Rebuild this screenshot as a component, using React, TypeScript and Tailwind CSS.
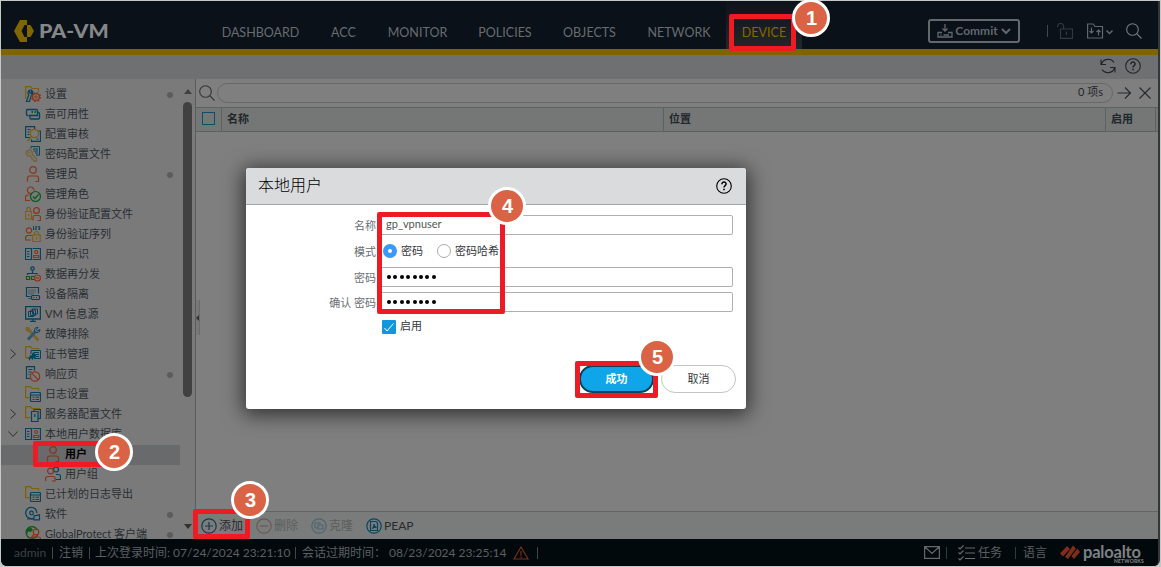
import React from 'react';
import clsx from 'clsx';

const BLUE = '#06415e';
const ORANGE = '#8a3418';
const YELLOW = '#7d6008';
const GREEN = '#0b5a1c';

const TABS = [
  { label: 'DASHBOARD', width: 'w-[109px]' },
  { label: 'ACC', width: 'w-[57px]' },
  { label: 'MONITOR', width: 'w-[91px]' },
  { label: 'POLICIES', width: 'w-[84px]' },
  { label: 'OBJECTS', width: 'w-[85px]' },
  { label: 'NETWORK', width: 'w-[94px]' },
  { label: 'DEVICE', width: 'w-[76px]', active: true },
];

type Item = {
  label: string;
  icon: string;
  dot?: boolean;
  arrow?: 'right' | 'down';
  child?: boolean;
  selected?: boolean;
};

const ITEMS: Item[] = [
  { label: '设置', icon: 'setup', dot: true },
  { label: '高可用性', icon: 'ha' },
  { label: '配置审核', icon: 'audit' },
  { label: '密码配置文件', icon: 'key' },
  { label: '管理员', icon: 'user', dot: true },
  { label: '管理角色', icon: 'role' },
  { label: '身份验证配置文件', icon: 'authProfile' },
  { label: '身份验证序列', icon: 'authSequence' },
  { label: '用户标识', icon: 'userId' },
  { label: '数据再分发', icon: 'redistribute' },
  { label: '设备隔离', icon: 'quarantine' },
  { label: 'VM 信息源', icon: 'vm' },
  { label: '故障排除', icon: 'tools' },
  { label: '证书管理', icon: 'cert', arrow: 'right' },
  { label: '响应页', icon: 'response', dot: true },
  { label: '日志设置', icon: 'log' },
  { label: '服务器配置文件', icon: 'server', arrow: 'right' },
  { label: '本地用户数据库', icon: 'userId', arrow: 'down' },
  { label: '用户', icon: 'user', child: true, selected: true },
  { label: '用户组', icon: 'group', child: true },
  { label: '已计划的日志导出', icon: 'log' },
  { label: '软件', icon: 'software', dot: true },
  { label: 'GlobalProtect 客户端', icon: 'globe', dot: true },
];

const FOLDER = <path d="M13.500 4.500v-2H7L5.500.6H.6v11H4.500" stroke={YELLOW} strokeWidth="1.200" />;

const ICONS: Record<string, React.ReactNode> = {
  setup: (
    <>
      <path d="M.7 6V.6h5L7.200 2.500h6.300v3M.7 6v7" stroke={YELLOW} strokeWidth="1.200" />
      <path d="M1.500 15.500L3.800 8.800C2.300 7 3 4.800 4.700 4v3l1.800.5V4.300c1.900 1.200 1.800 4-.2 5L4.500 15.500z" stroke={BLUE} strokeWidth="1.200" />
      <circle cx="11" cy="11" r="3.400" stroke={ORANGE} strokeWidth="1.400" />
      <circle cx="11" cy="11" r="4.500" stroke={ORANGE} strokeWidth="1.200" strokeDasharray="1.700 1.830" />
      <circle cx="11" cy="11" r="1.200" stroke={ORANGE} />
    </>
  ),
  ha: (
    <>
      <path d="M3.500 9.500h-1a1 1 0 0 1-1-1v-4a1 1 0 0 1 1-1h9a1 1 0 0 1 1 1v5H4" stroke={BLUE} strokeWidth="1.300" />
      <path d="M12.500 6.500h1a1 1 0 0 1 1 1v4.500a1 1 0 0 1-1 1H6a1 1 0 0 1-1-1V9.500" stroke={BLUE} strokeWidth="1.300" />
      <path d="M6.500 6h1.500M9.500 6H11" stroke={GREEN} strokeWidth="1.800" />
    </>
  ),
  audit: (
    <>
      <path d="M5 11.500H.6V.6h9v2.500M2.500 3.500h3M2.500 6H4.500M2.500 8.500h2" stroke={BLUE} strokeWidth="1.200" />
      <path d="M13.500 5h2v10.400H6.500V13.500M11.500 13h2" stroke={BLUE} strokeWidth="1.200" />
      <circle cx="9.500" cy="7.500" r="4.200" stroke={YELLOW} strokeWidth="1.200" />
      <path d="M6.500 10.500L2.500 15" stroke={YELLOW} strokeWidth="1.500" />
    </>
  ),
  key: (
    <>
      <path d="M6 2.500V.6h8.500v8.500H11M8 3h5M8.500 5h4.500M10 7h3" stroke={BLUE} />
      <path d="M1 6.500C1.500 4 4.500 3 6.500 5l1 1.500-.5 1.500 4.500 5v2H9l-1-1.500-1-.5V12L5 9.500 3 10C1.500 9.500 1 8 1 6.500z" stroke="#75643a" strokeWidth="1.400" />
      <circle cx="3.800" cy="6.700" r="1" stroke="#75643a" />
    </>
  ),
  user: (
    <>
      <circle cx="8" cy="4" r="3.300" stroke={ORANGE} strokeWidth="1.200" />
      <path d="M2.500 15.500v-3.500a2 2 0 0 1 2-2h7a2 2 0 0 1 2 2v3.500h-3" stroke={ORANGE} strokeWidth="1.200" />
    </>
  ),
  role: (
    <>
      <path d="M6.500 7.500A3.300 3.300 0 1 1 9 4.500M5 14.500H.5V11a2 2 0 0 1 2-2h2" stroke={ORANGE} strokeWidth="1.200" />
      <circle cx="10.500" cy="10.500" r="5" stroke={GREEN} strokeWidth="1.200" />
      <path d="M8 10.500l2 2 3.500-4" stroke={GREEN} strokeWidth="1.200" />
    </>
  ),
  authProfile: (
    <>
      <path d="M.5 5.500h6v7.500h-6zM2 5V3a1.700 1.700 0 0 1 3.400 0v2M3.600 8v2.500" stroke={YELLOW} strokeWidth="1.200" />
      <circle cx="11.500" cy="4.500" r="2.900" stroke={ORANGE} strokeWidth="1.200" />
      <path d="M8 14.500v-3c0-1 .5-2 1.500-2h4c1 0 2 1 2 2v3h-3" stroke={ORANGE} strokeWidth="1.200" />
    </>
  ),
  authSequence: (
    <>
      <circle cx="4" cy="4.500" r="2.700" stroke={ORANGE} strokeWidth="1.200" />
      <path d="M6 14H.6v-2.500a2 2 0 0 1 2-2H7" stroke={ORANGE} strokeWidth="1.200" />
      <path d="M7.700 9h7.500v6.500H7.700zM9.500 9V7.500a2 2 0 0 1 4 0V9M11.500 11v2.500" stroke={YELLOW} strokeWidth="1.200" />
      <path d="M8.500 0v4M10.200.5h1.500v1.500h-1.500v1.500h1.500M13.200.5h1.500v3h-1.500M13.200 2h1.500" stroke={BLUE} strokeWidth=".9" />
    </>
  ),
  userId: (
    <>
      <path d="M7.500 13.500h-7v-11h7M8 2.500h7.500v11H8M6.500 2.500v11" stroke={BLUE} strokeWidth="1.200" />
      <path d="M2 5.500h3M2 8h3M2 10.500h3" stroke={BLUE} strokeDasharray="2 .6" />
      <circle cx="11.200" cy="6" r="1.500" stroke={ORANGE} strokeWidth="1.200" />
      <path d="M8.700 11.500V9.500h5v2z" stroke={ORANGE} strokeWidth="1.200" />
    </>
  ),
  redistribute: (
    <>
      <circle cx="7.500" cy="2.500" r="1.700" stroke={BLUE} strokeWidth="1.200" />
      <path d="M7.500 4.500v3M2.500 9V7.500h10" stroke={BLUE} strokeWidth="1.200" />
      <path d="M1.500 10.500h3v3h-3zM6.500 10.500h3v3h-3z" stroke={GREEN} strokeWidth="1.200" />
      <circle cx="12.500" cy="12" r="3" stroke={ORANGE} strokeWidth="1.200" fill="#7b7b7b" />
      <path d="M11 12h3" stroke={ORANGE} strokeWidth="1.200" />
    </>
  ),
  quarantine: (
    <>
      <path d="M5.500 10.500h-4v-9h12v6M3.500 12.500h2" stroke={BLUE} strokeWidth="1.200" />
      <path d="M3.500 4h8M3.500 6h8M3.500 8h6" stroke={BLUE} strokeDasharray="1 1" />
      <rect x="6.500" y="9.500" width="8" height="4" rx="1" stroke={BLUE} strokeWidth="1.200" />
      <path d="M8.500 11.500h1M11 11.500h1" stroke={BLUE} />
    </>
  ),
  vm: (
    <>
      <path d="M.6.700h14.800v12.300H.6zM8 13v2.500M5 15.500h6" stroke={BLUE} strokeWidth="1.300" />
      <path d="M3.500 5.500h5v5h-5zM7.500 3h5v5h-5zM5.500 4h5v5.500h-5z" stroke={BLUE} />
    </>
  ),
  tools: (
    <>
      <path d="M4 4l9.500 10.500" stroke="#7a642c" strokeWidth="3" />
      <path d="M1 1.500h3l1.500 3L4 6 1 4z" stroke="#7a642c" fill="#7a642c" />
      <path d="M3 13.500l7.500-8" stroke="#31566b" strokeWidth="3" />
      <path d="M13 1.500C10.500 1 9 3 9.500 5L11 6.500c2 .5 4-.5 4-3L12.500 5 11.300 3.500z" stroke={BLUE} />
    </>
  ),
  cert: (
    <>
      {FOLDER}
      <path d="M6 8V4.500h9.500v8H9M9 6.500h5M10 8.500h4M11 10.500h3" stroke={BLUE} />
      <path d="M8 6l3 3-.5 3L9 13v-2l-1.500 3L6 12l-2 3v-2.500H2L5 11 4 9.500h2.500z" fill={BLUE} />
    </>
  ),
  response: (
    <>
      <path d="M5 12.500H1.500V.6h8v4M3.500 3.500h4M3.500 6h3M3.500 8.500h1" stroke={BLUE} strokeWidth="1.200" />
      <circle cx="10" cy="10.500" r="4.700" stroke={ORANGE} strokeWidth="1.200" />
      <path d="M6.700 7.200l6.600 6.600" stroke={ORANGE} strokeWidth="1.200" />
    </>
  ),
  log: (
    <>
      {FOLDER}
      <rect x="5.500" y="6.500" width="10" height="9" rx="1" stroke={BLUE} strokeWidth="1.200" />
      <path d="M5.500 9h10M7.500 11.200h2M10.500 11.200h3.500M7.500 13.500h2M10.500 13.500h3.500" stroke={BLUE} />
    </>
  ),
  server: (
    <>
      <path d="M14.500 3V2.500H7L5.500.6H.6v11H5" stroke={YELLOW} strokeWidth="1.200" />
      <path d="M6.500 5.500H13v10H6.500zM9 5.500V3.500h6.400v9h-2M9.800 8v3" stroke={BLUE} strokeWidth="1.200" />
    </>
  ),
  group: (
    <>
      <circle cx="11" cy="3.500" r="2.500" stroke={BLUE} strokeWidth="1.200" />
      <path d="M11 8.500h2.500a2 2 0 0 1 2 2v3H11" stroke={BLUE} strokeWidth="1.200" />
      <circle cx="5.500" cy="5" r="2.900" stroke={ORANGE} strokeWidth="1.200" />
      <path d="M.6 15v-2.500a2 2 0 0 1 2-2h5.500a2 2 0 0 1 2 2V15H7" stroke={ORANGE} strokeWidth="1.200" />
    </>
  ),
  software: (
    <>
      <path d="M11.900 7A5.600 5.600 0 1 0 8 12.300" stroke={BLUE} strokeWidth="1.300" />
      <circle cx="6.500" cy="7" r="1.800" stroke={BLUE} strokeWidth="1.200" />
      <path d="M2 13h6.500M9 9.800l5.500-1v5H9z" stroke={BLUE} strokeWidth="1.200" />
    </>
  ),
  globe: (
    <>
      <circle cx="7" cy="6.500" r="5.900" stroke={GREEN} strokeWidth="1.300" />
      <path d="M2 3l4-1.500L8 4 5.500 6 3 5.500 2 9z" fill={GREEN} />
      <circle cx="11" cy="6" r="2.800" stroke={ORANGE} strokeWidth="1.200" fill="#7b7b7b" />
      <path d="M9 8.500l-3.500 4M6.500 15.500V13a2 2 0 0 1 2-2h5a2 2 0 0 1 2 2v2.500" stroke={ORANGE} strokeWidth="1.200" />
    </>
  ),
};

function Badge({ n, className }: { n: number; className: string }) {
  return (
    <div
      className={clsx(
        'absolute z-30 flex size-[38px] items-center justify-center rounded-full border-3 border-white bg-[#d96344] pb-px pl-px text-[20px] font-bold text-white font-["Liberation_Sans",sans-serif]',
        className,
      )}
    >
      {n}
    </div>
  );
}

function Marker({ className }: { className: string }) {
  return <div className={clsx('absolute z-20 rounded-[2px] border-[5px] border-[#ed1c24]', className)} />;
}

function Help({ className }: { className?: string }) {
  return (
    <svg viewBox="0 0 16 16" fill="none" stroke="currentColor" className={className}>
      <circle cx="8" cy="8" r="7.300" strokeWidth="1.100" />
      <path d="M5.900 6.200c0-3 4.300-2.700 4.200-.2 0 1.600-2.100 1.500-2.100 3.400" strokeWidth="1.500" />
      <path d="M8 10.700v1.500" strokeWidth="1.600" />
    </svg>
  );
}

function SearchGlyph({ className }: { className?: string }) {
  return (
    <svg viewBox="0 0 16 16" fill="none" stroke="currentColor" strokeWidth="1.100" className={className}>
      <circle cx="6.500" cy="6.500" r="5.800" />
      <path d="M10.700 10.700l4.800 4.800" />
    </svg>
  );
}

function Header() {
  return (
    <header className="flex h-[54px] shrink-0 border-b-6 border-[#7f6400] bg-[#0b1118]">
      <div className="flex w-[205px] shrink-0 items-center pt-3 pl-[13px]">
        <svg viewBox="0 0 20 22" className="h-[22px] w-5" fill="#806600">
          <path d="M6 0h7v5h-2.500L7.500 11l3 6H13v5H6L0 11z" />
          <path d="M13 5h3.500L20 11l-3.500 6H13z" />
        </svg>
        <span className="ml-[5px] origin-left scale-x-[1.12] text-[19px] leading-5 font-black text-[#858789]">PA-VM</span>
      </div>
      <nav className="flex">
        {TABS.map((tab) => (
          <div
            key={tab.label}
            className={clsx(
              'flex items-center justify-center pt-[17px] text-[12.500px] whitespace-nowrap',
              tab.width,
              tab.active ? 'bg-linear-to-b from-[#0d1319] to-[#23272c] text-[#856900]' : 'text-[#676c71]',
            )}
          >
            {tab.label}
          </div>
        ))}
      </nav>
      <div className="ml-auto flex items-center pt-3 pr-4 text-[#62676b]">
        <div className="flex h-6 w-[92px] items-center justify-center rounded-[3px] border-2 border-[#65696c] text-[12px] font-bold">
          <svg viewBox="0 0 16 16" className="mr-0.5 size-4" fill="none" stroke="currentColor" strokeWidth="1.300">
            <path d="M8 1v7M5.500 5.500L8 8l2.500-2.500M5 9.500H1v4.500h14V9.500h-4M3.500 12h1M6.500 12H12" />
          </svg>
          Commit
          <svg viewBox="0 0 10 8" className="ml-[3px] h-2 w-2.5" fill="none" stroke="currentColor" strokeWidth="2">
            <path d="M1 2l4 4 4-4" />
          </svg>
        </div>
        <div className="ml-[27px] h-3 w-px bg-[#42474b]" />
        <svg viewBox="0 0 16 16" className="ml-[9px] size-4 text-[#34393e]" fill="none" stroke="currentColor" strokeWidth="1.200">
          <path d="M.6 4V3.500a3 3 0 0 1 6 0V6M3.500 6h12v9.400h-12zM9.500 8.500v3.500" />
        </svg>
        <svg viewBox="0 0 26 16" className="ml-[14px] h-4 w-[26px]" fill="none" stroke="currentColor" strokeWidth="1.200">
          <path d="M.6 1h5.500L8 3.500h7.500V15H.6zM4.500 4.500V10M2.500 8l2 2 2-2M11.500 12.500V7M9.500 9l2-2 2 2" />
          <path d="M19.500 7.500l3 3 3-3" strokeWidth="1.500" />
        </svg>
        <SearchGlyph className="ml-[13px] size-4 text-[#777b7e]" />
      </div>
    </header>
  );
}

function Sidebar() {
  return (
    <aside className="flex w-[195px] shrink-0 border-r border-[#5c5c5c] bg-[#7a7a7a]">
      <div className="w-[179px] overflow-hidden pt-[6px]">
        {ITEMS.map((item) => (
          <div
            key={item.label}
            className={clsx(
              'relative flex h-5 items-center pb-0.5 pl-6 whitespace-nowrap',
              item.child && 'pl-11',
              item.selected && 'bg-[#696a6b]',
            )}
          >
            {item.arrow && (
              <svg
                viewBox="0 0 10 10"
                className={clsx('absolute left-[7px] size-2.5', item.arrow === 'down' && 'rotate-90')}
                fill="none"
                stroke="#303030"
              >
                <path d="M2.500.5L7.500 5l-5 4.500" />
              </svg>
            )}
            <svg viewBox="0 0 16 16" className="size-4 shrink-0" fill="none">
              {ICONS[item.icon]}
            </svg>
            <span
              className={clsx(
                'ml-1 text-[11px] leading-4',
                item.selected ? 'font-bold text-black' : 'text-[#292e33]',
              )}
            >
              {item.label}
            </span>
            {item.dot && <span className="absolute top-[7px] right-[7px] size-1.5 rounded-full bg-[#5c5c5c]" />}
          </div>
        ))}
      </div>
      <div className="flex flex-1 flex-col items-center pt-[10px] pb-[10px]">
        <div className="border-x-[4.500px] border-b-5 border-x-transparent border-b-[#404040]" />
        <div className="mt-2 h-[295px] w-[9px] rounded-full bg-[#414141]" />
        <div className="mt-auto border-x-[4.500px] border-t-5 border-x-transparent border-t-[#303030]" />
      </div>
    </aside>
  );
}

function Action({ label, off, color, children }: { label: string; off?: boolean; color: string; children: React.ReactNode }) {
  return (
    <div className={clsx('flex items-center gap-0.5 text-[12px]', off ? 'text-[#5c5e5e]' : 'text-[#272b2e]')}>
      <svg viewBox="0 0 16 16" className="size-4" fill="none" stroke={color} strokeWidth="1.200">
        <circle cx="8" cy="8" r="7.200" />
        {children}
      </svg>
      {label}
    </div>
  );
}

function Content() {
  return (
    <main className="relative flex flex-1 flex-col bg-[#7f7f7f] text-[#22262a]">
      <div className="flex h-7 shrink-0 items-center pb-px pl-[3px]">
        <SearchGlyph className="size-4 text-[#30353a]" />
        <div className="ml-0.5 flex h-5 w-[896px] items-center justify-end rounded-full border border-[#686868] pr-[9px] text-[11px]">
          0 项s
        </div>
        <svg viewBox="0 0 36 14" className="ml-1 h-3.5 w-9" fill="none" stroke="#25292c" strokeWidth="1.100">
          <path d="M.5 7h13M8 1.500L13.500 7 8 12.500M22.500 1.500l11 11M33.500 1.500l-11 11" />
        </svg>
      </div>
      <div className="flex h-[25px] shrink-0 border-y border-[#5c6161] bg-[#757777] text-[11px] leading-[21px] font-bold">
        <div className="flex w-[26px] items-center justify-center border-r border-[#5c6161] pb-0.5">
          <div className="size-[13px] border border-[#094f70]" />
        </div>
        <div className="w-[442px] border-r border-[#5c6161] pl-[5px]">名称</div>
        <div className="w-[442px] border-r border-[#5c6161] pl-[5px]">位置</div>
        <div className="w-[50px] border-r border-[#5c6161] pl-[5px]">启用</div>
      </div>
      <div className="flex-1" />
      {/* splitter handle */}
      <div className="absolute top-[221px] left-0 flex h-[35px] w-1 items-center border-r border-[#6a6a6a] bg-[#777]">
        <div className="border-y-3 border-r-3 border-y-transparent border-r-[#333]" />
      </div>
      <div className="flex h-7 shrink-0 items-center gap-[13px] border-t border-[#626666] bg-[#7a7c7b] pl-[5px]">
        <Action label="添加" color="#17384a"><path d="M8 4v8M4 8h8" /></Action>
        <Action label="删除" color="#6b5658" off><path d="M4 8h8" /></Action>
        <Action label="克隆" color="#4d6570" off><path d="M7 10H4V5h5v2M7 7h5v4H7z" /></Action>
        <Action label="PEAP" color="#0a4360"><path d="M4.500 3.500H10l1.500 1.500v7.500h-7zM6 10.500c2-1 2-3 2-4.500 0 2 1 3 2.500 3.500C9 9 7.500 9.500 6 10.500" /></Action>
      </div>
    </main>
  );
}

function Footer() {
  return (
    <footer className="flex h-[27px] shrink-0 items-center bg-[#02090d] pl-3 text-[12px] whitespace-nowrap text-[#5b5f61]">
      <span className="ml-px w-8 text-[#3c4245]">admin</span>
      <i className="ml-[6px] h-3 w-px bg-[#414649]" />
      <span className="ml-[6px] w-6">注销</span>
      <i className="ml-[6px] h-3 w-px bg-[#414649]" />
      <span className="ml-[5px] w-[195px]">上次登录时间: 07/24/2024 23:21:10</span>
      <i className="ml-[5px] h-3 w-px bg-[#414649]" />
      <span className="ml-[6px] w-[87px]">会话过期时间：</span>
      <span className="w-[117px]">08/23/2024 23:25:14</span>
      <svg viewBox="0 0 16 14" className="ml-[7px] h-3.5 w-4" fill="none" stroke="#762f19" strokeWidth="1.200">
        <path d="M8 1l7 12H1zM8 5v4.500M8 10.500V12" />
      </svg>
      <i className="ml-2 h-3 w-px bg-[#414649]" />
      <div className="ml-auto flex items-center pr-[11px]">
        <svg viewBox="0 0 16 13" className="h-[13px] w-4" fill="none" stroke="#62676d" strokeWidth="1.200">
          <path d="M.6.6h14.800v11.800H.6zM1 1l7 6.500L15 1" />
        </svg>
        <i className="ml-[6px] h-3 w-px bg-[#34393c]" />
        <svg viewBox="0 0 17 16" className="ml-[11px] h-4 w-[17px]" fill="none" stroke="#666b6f" strokeWidth="1.100">
          <path d="M7 3h10M7 8h10M7 13.500h10M.5 2.500L2 4l3.500-3.500M.5 7.500L2 9l3.500-3.500M.5 13.500L2 15l3.500-3.500" />
        </svg>
        <span className="ml-[3px]">任务</span>
        <i className="ml-[13px] h-3 w-px bg-[#34393c]" />
        <span className="ml-[7px]">语言</span>
        <svg viewBox="0 0 20 15" className="ml-[13px] h-[15px] w-5" fill="#7e2d18">
          <path d="M0 8.500L7 1l3 3-7 7.500zM5 12L13 .5l3 3L8 14zM11.500 11l6-7.500L20 7l-6 7z" />
        </svg>
        <div className="ml-[3px] flex w-16 flex-col pt-1 text-[#7e8182]">
          <span className="text-[16.500px] leading-[14px] font-bold tracking-[-0.2px]">paloalto</span>
          <span className="pr-[3px] text-right text-[5px] leading-[5px] font-black tracking-[0.2px]">NETWORKS</span>
        </div>
      </div>
    </footer>
  );
}

function Row({ label, className, children }: { label?: string; className: string; children: React.ReactNode }) {
  return (
    <div className={clsx('flex items-center', className)}>
      <label className="w-[131px] pt-0.5 pr-px text-right text-[#6b7075]">{label}</label>
      {children}
    </div>
  );
}

function LocalUserDialog() {
  return (
    <section className="absolute top-[168px] left-[246px] z-10 h-[241px] w-[500px] overflow-hidden rounded-[3px] bg-white text-[11px] text-[#33383d] shadow-[0_3px_20px_3px_rgba(0,0,0,0.6)]">
      <div className="flex h-[37px] items-center justify-between border-b border-[#a0a6aa] bg-[#dadbdd] pr-[14px] pb-0.5 pl-3">
        <h2 className="text-[16px] font-light text-black">本地用户</h2>
        <Help className="mt-0.5 size-4 text-black" />
      </div>
      <div className="pt-[10px]">
        <Row label="名称" className="h-5">
          <div className="h-5 w-[356px] rounded-[2px] border border-[#aeb1b4] pl-[8px] leading-[16px] text-[#555]">gp_vpnuser</div>
        </Row>
        <Row label="模式" className="h-8">
          <span className="ml-[6px] flex size-[14px] items-center justify-center rounded-full bg-[#3c98fb]">
            <span className="size-1 rounded-full bg-white" />
          </span>
          <span className="ml-1">密码</span>
          <span className="ml-[14px] size-[14px] rounded-full border border-[#aaa]" />
          <span className="ml-1">密码哈希</span>
        </Row>
        <div className="flex flex-col gap-[5px]">
          {['密码', '确认 密码'].map((label) => (
            <Row key={label} label={label} className="h-5">
              <div className="flex h-5 w-[356px] items-center gap-[2.400px] rounded-[2px] border border-[#aeb1b4] pl-[9px]">
                {Array.from({ length: 8 }, (_, i) => (
                  <span key={i} className="size-1 rounded-full bg-black" />
                ))}
              </div>
            </Row>
          ))}
        </div>
        <Row className="mt-2 h-[14px]">
          <span className="ml-[5px] flex size-[14px] items-center justify-center rounded-[1px] bg-[#1098de]">
            <svg viewBox="0 0 10 10" className="size-2.5" fill="none" stroke="white">
              <path d="M.5 6l2.500 3L9.500 1.500" />
            </svg>
          </span>
          <span className="ml-[4px] pb-px">启用</span>
        </Row>
      </div>
      <div className="mt-[31px] flex justify-end gap-[7px] pr-[10px]">
        <button className="h-7 w-[75px] rounded-full border-2 border-[#0b4058] bg-[#0ea5e9] font-bold text-white">成功</button>
        <button className="h-7 w-[75px] rounded-full border border-[#c2c4c5] bg-white">取消</button>
      </div>
    </section>
  );
}

export default function App() {
  return (
    <div className="relative h-[567px] w-[1161px] overflow-hidden bg-[#c5c8c7] pt-px pl-px font-[Lato,'Noto_Sans_CJK_SC',sans-serif]">
      <div className="flex h-[565px] w-[1159px] flex-col overflow-hidden rounded-b-[6px] border-r-2 border-[#343638] bg-[#02090d]">
        <Header />
        <div className="flex h-6 shrink-0 items-center justify-end gap-[9px] bg-[#6e7072] pr-[17px] pb-0.5 text-[#202326]">
          <svg viewBox="0 0 16 16" className="size-4" fill="none" stroke="currentColor" strokeWidth="1.100">
            <path d="M1 1.500v5h5M1.500 6A7 7 0 0 1 14 4.500M15 14.500V9.500h-5M14.500 10A7 7 0 0 1 2 11.500" />
          </svg>
          <Help className="size-4" />
        </div>
        <div className="flex min-h-0 flex-1">
          <Sidebar />
          <Content />
        </div>
        <Footer />
      </div>

      <LocalUserDialog />

      {/* numbered steps */}
      <Marker className="top-[14px] left-[729px] h-[37px] w-[67px]" />
      <Badge n={1} className="top-[-1px] left-[792px]" />
      <Marker className="top-[441px] left-[33px] h-[26px] w-[80px]" />
      <Badge n={2} className="top-[433px] left-[95px]" />
      <Marker className="top-[509px] left-[193px] h-[30px] w-[57px]" />
      <Badge n={3} className="top-[481px] left-[231px]" />
      <Marker className="top-[212px] left-[377px] h-[102px] w-[128px]" />
      <Badge n={4} className="top-[187px] left-[488px]" />
      <Marker className="top-[361px] left-[575px] h-[37px] w-[83px]" />
      <Badge n={5} className="top-[338px] left-[638px]" />
    </div>
  );
}
